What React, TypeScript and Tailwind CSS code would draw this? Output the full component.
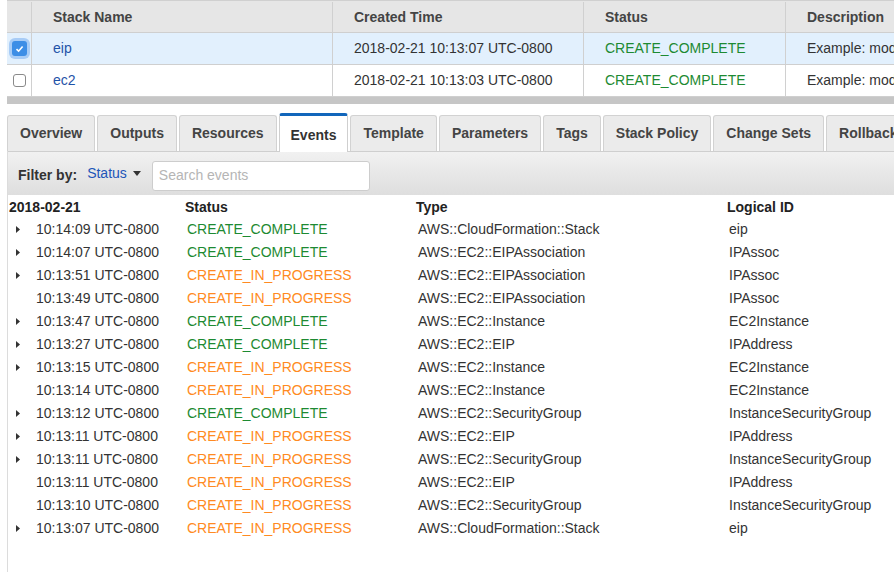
import React from 'react';

const STACKS = [
  { name: 'eip', created: '2018-02-21 10:13:07 UTC-0800', status: 'CREATE_COMPLETE', desc: 'Example: modify an Elastic IP', selected: true },
  { name: 'ec2', created: '2018-02-21 10:13:03 UTC-0800', status: 'CREATE_COMPLETE', desc: 'Example: modify an EC2 instance', selected: false },
];

const TABS = ['Overview', 'Outputs', 'Resources', 'Events', 'Template', 'Parameters', 'Tags', 'Stack Policy', 'Change Sets', 'Rollback Triggers'];

const EVENTS = [
  { time: '10:14:09 UTC-0800', status: 'CREATE_COMPLETE', type: 'AWS::CloudFormation::Stack', id: 'eip', expand: true },
  { time: '10:14:07 UTC-0800', status: 'CREATE_COMPLETE', type: 'AWS::EC2::EIPAssociation', id: 'IPAssoc', expand: true },
  { time: '10:13:51 UTC-0800', status: 'CREATE_IN_PROGRESS', type: 'AWS::EC2::EIPAssociation', id: 'IPAssoc', expand: true },
  { time: '10:13:49 UTC-0800', status: 'CREATE_IN_PROGRESS', type: 'AWS::EC2::EIPAssociation', id: 'IPAssoc', expand: false },
  { time: '10:13:47 UTC-0800', status: 'CREATE_COMPLETE', type: 'AWS::EC2::Instance', id: 'EC2Instance', expand: true },
  { time: '10:13:27 UTC-0800', status: 'CREATE_COMPLETE', type: 'AWS::EC2::EIP', id: 'IPAddress', expand: true },
  { time: '10:13:15 UTC-0800', status: 'CREATE_IN_PROGRESS', type: 'AWS::EC2::Instance', id: 'EC2Instance', expand: true },
  { time: '10:13:14 UTC-0800', status: 'CREATE_IN_PROGRESS', type: 'AWS::EC2::Instance', id: 'EC2Instance', expand: false },
  { time: '10:13:12 UTC-0800', status: 'CREATE_COMPLETE', type: 'AWS::EC2::SecurityGroup', id: 'InstanceSecurityGroup', expand: true },
  { time: '10:13:11 UTC-0800', status: 'CREATE_IN_PROGRESS', type: 'AWS::EC2::EIP', id: 'IPAddress', expand: true },
  { time: '10:13:11 UTC-0800', status: 'CREATE_IN_PROGRESS', type: 'AWS::EC2::SecurityGroup', id: 'InstanceSecurityGroup', expand: true },
  { time: '10:13:11 UTC-0800', status: 'CREATE_IN_PROGRESS', type: 'AWS::EC2::EIP', id: 'IPAddress', expand: false },
  { time: '10:13:10 UTC-0800', status: 'CREATE_IN_PROGRESS', type: 'AWS::EC2::SecurityGroup', id: 'InstanceSecurityGroup', expand: false },
  { time: '10:13:07 UTC-0800', status: 'CREATE_IN_PROGRESS', type: 'AWS::CloudFormation::Stack', id: 'eip', expand: true },
];

const statusColor = (s: string) => (s === 'CREATE_COMPLETE' ? 'text-[#1d8a32]' : 'text-[#ff8a22]');

function Checkbox({ checked }: { checked: boolean }) {
  if (checked) {
    return (
      <div className="flex h-[15px] w-[15px] items-center justify-center rounded-[3px] bg-[#3d8ee6] shadow-[0_0_0_3px_rgba(120,175,240,0.55)]">
        <svg width="9" height="8" viewBox="0 0 9 8">
          <path d="M1.5 4.2 L3.6 6.2 L7.6 1.6" fill="none" stroke="white" strokeWidth="1.6" />
        </svg>
      </div>
    );
  }
  return <div className="h-[13px] w-[13px] rounded-[3px] border border-[#8a8a8a] bg-white" />;
}

function Caret() {
  return (
    <svg width="6" height="9" viewBox="0 0 6 9" className="shrink-0">
      <polygon points="1,1 5,4.5 1,8" fill="#333" />
    </svg>
  );
}

export default function App() {
  return (
    <div className="h-[572px] w-[894px] overflow-hidden bg-white pl-[7px] font-['Liberation_Sans',Arial,sans-serif] text-[14px] text-[#333]">
      {/* Stacks table */}
      <div className="w-[1000px] border-t border-[#d0d0d0]">
        <div className="grid h-[32px] grid-cols-[25px_301px_251px_202px_221px] border-b border-[#cfcfcf] bg-[#e6e6e6] pt-[1px] font-bold text-[#444]">
          <div className="border-r border-[#d0d0d0]" />
          <div className="flex items-center border-r border-[#d0d0d0] pl-[21px]">Stack Name</div>
          <div className="flex items-center border-r border-[#d0d0d0] pl-[21px]">Created Time</div>
          <div className="flex items-center border-r border-[#d0d0d0] pl-[21px]">Status</div>
          <div className="flex items-center pl-[21px]">Description</div>
        </div>
        {STACKS.map((s) => (
          <div
            key={s.name}
            className={`grid h-[32px] grid-cols-[25px_301px_251px_202px_221px] border-b border-[#cfcfcf] ${s.selected ? 'bg-[#e2f0fd]' : 'bg-white'}`}
          >
            <div className="flex items-center justify-center border-r border-[#d0d0d0] pl-[1px]">
              <Checkbox checked={s.selected} />
            </div>
            <div className="flex items-center border-r border-[#d0d0d0] pl-[21px] text-[#1f53a8]">{s.name}</div>
            <div className="flex items-center border-r border-[#d0d0d0] pl-[21px]">{s.created}</div>
            <div className="flex items-center border-r border-[#d0d0d0] pl-[21px] text-[#1d8a32]">{s.status}</div>
            <div className="flex items-center overflow-hidden whitespace-nowrap pl-[21px]">{s.desc}</div>
          </div>
        ))}
        <div className="h-[7px] bg-[#c6c6c6]" />
      </div>

      {/* Tabs */}
      <div className="mt-[9px] flex h-[38px] items-end gap-[2px] whitespace-nowrap">
        {TABS.map((t) =>
          t === 'Events' ? (
            <div
              key={t}
              className="relative z-10 -mb-px flex h-[39px] shrink-0 items-center rounded-t-[3px] border-x border-t-[3px] border-x-[#cfcfcf] border-t-[#1166bb] bg-white px-[11px] pt-[3px] font-bold text-[#333]"
            >
              {t}
            </div>
          ) : (
            <div
              key={t}
              className="flex h-[36px] shrink-0 items-center rounded-t-[3px] border border-b-0 border-[#d2d2d2] bg-[#ebebeb] px-[12px] font-bold text-[#444]"
            >
              {t}
            </div>
          )
        )}
      </div>

      {/* Events panel */}
      <div className="h-[430px] border-l border-[#dcdcdc]">
        <div className="flex h-[44px] items-center gap-[10px] border-t border-[#cfcfcf] bg-gradient-to-b from-[#f1f1f1] to-[#dedede] pl-[10px] pt-[4px]">
          <span className="font-bold text-[#333]">Filter by:</span>
          <span className="flex items-center gap-[6px] pb-[4px] text-[#2155b8]">
            Status
            <svg width="8" height="5" viewBox="0 0 8 5">
              <polygon points="0,0 8,0 4,5" fill="#333" />
            </svg>
          </span>
          <div className="ml-[1px] flex h-[30px] w-[218px] items-center rounded-[3px] border border-[#cdcdcd] bg-white pl-[6px] text-[#b5b5b5]">
            Search events
          </div>
        </div>

        <div className="grid h-[23px] grid-cols-[176px_231px_311px_1fr] items-end font-bold text-[#222]">
          <div className="pl-[1px]">2018-02-21</div>
          <div className="pl-[1px]">Status</div>
          <div className="pl-[1px]">Type</div>
          <div className="pl-[1px]">Logical ID</div>
        </div>

        {EVENTS.map((e, i) => (
          <div key={i} className="grid h-[23px] grid-cols-[176px_231px_311px_1fr] items-center whitespace-nowrap">
            <div className="flex items-center">
              <div className="flex w-[28px] justify-start pl-[7px]">{e.expand && <Caret />}</div>
              <span>{e.time}</span>
            </div>
            <div className={`pl-[3px] ${statusColor(e.status)}`}>{e.status}</div>
            <div className="pl-[3px]">{e.type}</div>
            <div className="pl-[3px]">{e.id}</div>
          </div>
        ))}
      </div>
    </div>
  );
}
